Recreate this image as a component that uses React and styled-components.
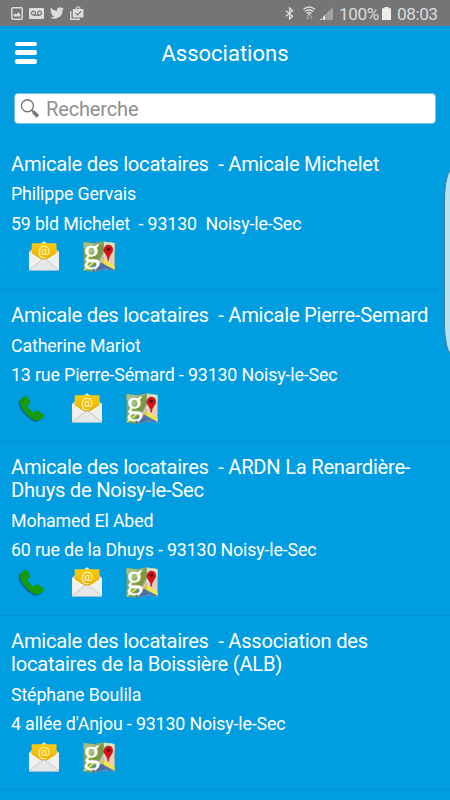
import React from 'react';
import styled, { createGlobalStyle } from 'styled-components';

const GlobalStyle = createGlobalStyle`
  * {
    box-sizing: border-box;
  }
  body {
    margin: 0;
    background: #009de0;
    font-family: Roboto, 'Liberation Sans', sans-serif;
    overflow: hidden;
  }
  h1, h2, p, ul {
    margin: 0;
    padding: 0;
    font-weight: 400;
  }
  svg {
    display: block;
    flex-shrink: 0;
    overflow: visible;
  }
`;

const Screen = styled.div`
  position: relative;
  width: 450px;
  height: 800px;
  overflow: hidden;
  background: #009de0;
  color: #fff;
`;

const StatusBar = styled.div`
  display: flex;
  justify-content: space-between;
  height: 26px;
  padding: 0 12px 0 11px;
  background: #757575;
  color: #dcdcdc;
`;

const StatusGroup = styled.div`
  display: flex;
  align-items: center;
  gap: ${({ $gap }) => $gap || 0}px;
`;

const StatusText = styled.span`
  width: ${({ $width }) => $width}px;
  margin-left: 6px;
  padding-top: 1px;
  font-size: 17.2px;
  letter-spacing: -0.45px;
  line-height: 26px;
  white-space: nowrap;
`;

const Header = styled.header`
  display: grid;
  grid-template-columns: 37px 1fr 37px;
  align-items: center;
  height: 55px;
`;

const MenuButton = styled.button`
  display: flex;
  flex-direction: column;
  gap: 4px;
  width: 37px;
  padding: 0 0 1.5px 15px;
  border: 0;
  background: none;
`;

const MenuLine = styled.span`
  height: 4.6px;
  border-radius: 2.3px;
  background: #fff;
`;

const Title = styled.h1`
  font-size: 22px;
  line-height: 26px;
  text-align: center;
`;

const SearchBar = styled.label`
  display: flex;
  align-items: center;
  gap: 7px;
  height: 31px;
  margin: 12px 14px 14px;
  padding-left: 6px;
  border: 1px solid #7fc3e4;
  border-radius: 4px;
  background: #fff;
`;

const SearchInput = styled.input`
  flex: 1;
  min-width: 0;
  padding: 1px 0 0;
  border: 0;
  outline: 0;
  background: none;
  font-family: inherit;
  font-size: 20px;
  letter-spacing: -0.15px;
  line-height: 24px;

  &::placeholder {
    color: #8f8f8f;
    opacity: 1;
  }
`;

const List = styled.ul`
  list-style: none;
`;

const Item = styled.li`
  height: ${({ $tall }) => ($tall ? 174.4 : 151.8)}px;
  padding: 14.5px 11px 0;
  border-bottom: 1px solid #0091cf;
`;

const ItemTitle = styled.h2`
  margin-bottom: 9px;
  font-size: 20.2px;
  letter-spacing: -0.27px;
  line-height: 22.7px;
  white-space: pre-wrap;
`;

const ItemText = styled.p`
  margin-bottom: 9.4px;
  font-size: 17.8px;
  letter-spacing: -0.14px;
  line-height: 20px;
  white-space: pre;
`;

const Actions = styled.div`
  display: flex;
  gap: 23px;
  margin-top: -2px;
  padding-left: ${({ $phone }) => ($phone ? 6 : 17)}px;
`;

const EdgePanel = styled.div`
  position: absolute;
  top: 168px;
  left: 444.4px;
  width: 25px;
  height: 188px;
  border: 1px solid #3a7d9c;
  border-radius: 9px / 32px;
  background: #b3e1f6;
`;

function PictureIcon() {
  return (
    <svg width="12" height="13" viewBox="0 0 12 13">
      <rect x="0.8" y="0.8" width="10.4" height="11.4" rx="1" fill="none" stroke="#dcdcdc" strokeWidth="1.5" />
      <path d="M2.5 9.5V8l1.8-1.7 1 1.2 2-2.5 2.2 3v1.5z" fill="#dcdcdc" />
    </svg>
  );
}

function VoicemailIcon() {
  return (
    <svg width="15" height="11" viewBox="0 0 15 11">
      <rect width="15" height="11" rx="1" fill="#dcdcdc" />
      <g fill="none" stroke="#757575" strokeWidth="1.2">
        <circle cx="4.5" cy="5.2" r="2" />
        <circle cx="10.5" cy="5.2" r="2" />
        <path d="M4.5 7.3h6" />
      </g>
    </svg>
  );
}

function TwitterIcon() {
  return (
    <svg width="14" height="12" viewBox="0 2 24 20">
      <path
        d="M24 4.6a10 10 0 0 1-2.8.8 5 5 0 0 0 2.1-2.7 10 10 0 0 1-3.1 1.2 4.9 4.9 0 0 0-8.4 4.5A14 14 0 0 1 1.7 3.1a4.9 4.9 0 0 0 1.5 6.6 5 5 0 0 1-2.2-.6 4.9 4.9 0 0 0 3.9 4.9 5 5 0 0 1-2.2.1 4.9 4.9 0 0 0 4.6 3.4A9.9 9.9 0 0 1 0 19.5a14 14 0 0 0 21.5-12.4A10 10 0 0 0 24 4.6z"
        fill="#dcdcdc"
      />
    </svg>
  );
}

function BagIcon() {
  return (
    <svg width="14" height="14" viewBox="0 0 14 14">
      <path d="M.8 5v8.2H10" fill="none" stroke="#dcdcdc" strokeWidth="1.4" />
      <path d="M2.8 3h3V1.4L6.7.5h2.8l.9.9V3h3v8.6H2.8zM7 1.5V3h2.3V1.5z" fill="#dcdcdc" fillRule="evenodd" />
      <path d="M5.5 7l2 2 3.6-3.6" fill="none" stroke="#757575" strokeWidth="1.2" />
    </svg>
  );
}

function BluetoothIcon() {
  return (
    <svg width="9" height="13" viewBox="-1 0 9 13">
      <path d="M.8 3.8l6.8 5.5-3 2.7V1l3 2.7L.8 9.3" fill="none" stroke="#dcdcdc" strokeWidth="1.3" />
    </svg>
  );
}

const WifiSvg = styled.svg`
  margin: 0 5px 0 9px;
`;

function WifiIcon() {
  return (
    <WifiSvg width="13" height="14" viewBox="-0.7 0 13 14">
      <g fill="none" stroke="#dcdcdc" strokeWidth="1.3">
        <path d="M.7 3.4q5.8-4.8 11.6 0" />
        <path d="M2.4 5.5q4.1-3.5 8.2 0" />
        <path d="M4.2 7.5q2.3-2 4.6 0" />
      </g>
      <circle cx="6.5" cy="8.7" r="0.9" fill="#dcdcdc" />
      <path
        d="M4.8 9.3v3.8M3.3 11.5l1.5 1.9 1.4-1.9M8.5 13.5V9.8M7 11.4l1.5-1.8 1.4 1.8"
        fill="none"
        stroke="#a2a2a2"
        strokeWidth="1"
      />
    </WifiSvg>
  );
}

function SignalIcon() {
  return (
    <svg width="13" height="13" viewBox="0 0 13 13">
      <path d="M0 13L13 0v13z" fill="#a2a2a2" />
      <path d="M0 13l2.2-2.2V13zM3 13v-3l2.4-2.4V13z" fill="#e8e8e8" />
      <path d="M2.5 9v4M6 6v7" stroke="#757575" strokeWidth="0.7" />
    </svg>
  );
}

function BatteryIcon() {
  return (
    <svg width="9" height="13" viewBox="0 0 9 13">
      <path d="M2.5 0h4v1.3H9V13H0V1.3h2.5z" fill="#ededed" />
    </svg>
  );
}

function SearchIcon() {
  return (
    <svg width="18" height="19" viewBox="0 0 18 19">
      <circle cx="6.4" cy="6.7" r="6" fill="none" stroke="#777" strokeWidth="1.4" />
      <path d="M10.6 11.2l2 2" stroke="#777" strokeWidth="1.8" />
      <path d="M12.3 12.8l4.6 4.6" stroke="#777" strokeWidth="3.6" />
    </svg>
  );
}

function PhoneIcon() {
  return (
    <svg width="31" height="31" viewBox="0.8 0 31 31">
      <path
        d="M3.8 6.7L9 2.9q1-.5 1.5.4l3.3 6q.4 1-.5 1.6l-2.8 1.8q2.3 4.5 6.6 7.3l2.8-2.2q.9-.7 1.7 0l5.8 4.2q.7.7.1 1.5-2 3.6-5.3 4.4-5 .8-10.8-4.6-7.5-7-8.3-12.7-.3-2.7.7-3.9z"
        fill="#086d91"
        transform="translate(-0.6 0.7)"
      />
      <path
        d="M4.3 6.2L9.3 2.7q1-.5 1.5.4l3.3 6q.4 1-.5 1.6l-2.6 1.7q2.2 4.5 6.4 7.3l2.8-2.2q.9-.7 1.7 0l5.8 4.2q.7.7.1 1.5-2 3.4-5.3 4.2-4.8.6-10.3-4.7-7.3-7-8.1-12.4-.3-2.7.2-4.1z"
        fill="#189b08"
      />
    </svg>
  );
}

function MailIcon() {
  return (
    <svg width="32" height="31" viewBox="0 0 32 31">
      <defs>
        <linearGradient id="paper" x1="0" y1="0" x2="0" y2="1">
          <stop offset="0" stopColor="#f8cc12" />
          <stop offset="1" stopColor="#e5ae00" />
        </linearGradient>
      </defs>
      <path d="M1 11l3-3 12-7.5L28 8l3 3v18.2H1z" fill="#d6dadb" />
      <path d="M13.5 2.5L16 .2l2.6 2.3z" fill="#f5f5f5" />
      <path d="M3.7 2.3h24.8v15L16 21 3.7 16z" fill="url(#paper)" />
      <text x="16" y="13.8" textAnchor="middle" fontFamily="Roboto, sans-serif" fontSize="13.5" fill="#fff7cd">
        @
      </text>
      <path d="M1 11l12 7.6 3 1.4 3-1.4L31 11v18.2H1z" fill="#f0f0f0" />
      <path d="M1 29.2l12.6-10.4q2.4-1.7 4.8 0L31 29.2z" fill="#e6e7e7" />
      <path d="M1 29.2l12.6-10.4q2.4-1.7 4.8 0L31 29.2" fill="none" stroke="#bcbdbd" strokeWidth="0.8" />
      <path d="M1 11l12 8.2M31 11l-12 8.2" stroke="#fff" strokeWidth="0.8" />
      <path d="M1 29.5h30" stroke="#9fbdc9" strokeWidth="0.7" />
    </svg>
  );
}

function MapIcon() {
  return (
    <svg width="32" height="32" viewBox="0 0 32 32">
      <defs>
        <clipPath id="sheet">
          <path d="M.5 1l10.3 1.2L20.7.5 31.5 2v27.5l-10.8-1.3L10.8 31 .5 29.2z" />
        </clipPath>
      </defs>
      <g clipPath="url(#sheet)">
        <path d="M0 0h32v32H0z" fill="#84a849" />
        <path d="M0 0h21L8 13 0 6z" fill="#a6c080" />
        <path d="M11 27L20.7 11 32 1v31H11z" fill="#e7cfbb" />
        <path d="M20.7 0H32v9L20.7 14z" fill="#d5dfc3" />
        <path d="M14 27V20l7-7v17z" fill="#b9b0ac" />
        <path d="M9 32l2-8 9-3 12 7v4z" fill="#4b76b9" />
        <path d="M19 17l13 8v4l-15-8z" fill="#f3e34a" />
        <path d="M12 29L29 1" stroke="#efe8d8" strokeWidth="1.6" />
        <path d="M0 30L11 21" stroke="#ebe77d" strokeWidth="1.4" />
        <path d="M10.8 0h9.9v32h-9.9z" fill="#3f5f50" opacity="0.2" />
      </g>
      <text
        transform="translate(0.4 20.8) scale(1.25 1.3)"
        fontFamily="'Liberation Serif', serif"
        fontSize="26"
        fill="#fff"
        stroke="#fff"
        strokeWidth="0.3"
      >
        g
      </text>
      <path
        d="M25 19.5q-.2-4.3-3-7.2-2.2-2.7-.8-5.2Q22.5 4 25.4 4q3.4.1 4.3 3.3.6 2.7-1.5 5.3-2.6 3.2-2.8 6.9z"
        fill="#d91115"
        stroke="#9d171a"
        strokeWidth="0.5"
      />
      <circle cx="25.4" cy="8.3" r="1.7" fill="#64070c" />
    </svg>
  );
}

const associations = [
  {
    title: 'Amicale des locataires  - Amicale Michelet',
    contact: 'Philippe Gervais',
    address: '59 bld Michelet  - 93130  Noisy-le-Sec',
  },
  {
    title: 'Amicale des locataires  - Amicale Pierre-Semard',
    contact: 'Catherine Mariot',
    address: '13 rue Pierre-Sémard - 93130 Noisy-le-Sec',
    phone: true,
  },
  {
    title: 'Amicale des locataires  - ARDN La Renardière-Dhuys de Noisy-le-Sec',
    contact: 'Mohamed El Abed',
    address: '60 rue de la Dhuys - 93130 Noisy-le-Sec',
    phone: true,
    tall: true,
  },
  {
    title: 'Amicale des locataires  - Association des locataires de la Boissière (ALB)',
    contact: 'Stéphane Boulila',
    address: "4 allée d'Anjou - 93130 Noisy-le-Sec",
    tall: true,
  },
];

export default function App() {
  return (
    <>
      <GlobalStyle />
      <Screen>
        <StatusBar>
          <StatusGroup $gap={6}>
            <PictureIcon />
            <VoicemailIcon />
            <TwitterIcon />
            <BagIcon />
          </StatusGroup>
          <StatusGroup>
            <BluetoothIcon />
            <WifiIcon />
            <SignalIcon />
            <StatusText $width={43}>100%</StatusText>
            <BatteryIcon />
            <StatusText $width={41}>08:03</StatusText>
          </StatusGroup>
        </StatusBar>

        <Header>
          <MenuButton type="button" aria-label="Menu">
            <MenuLine />
            <MenuLine />
            <MenuLine />
          </MenuButton>
          <Title>Associations</Title>
        </Header>

        <SearchBar>
          <SearchIcon />
          <SearchInput placeholder="Recherche" />
        </SearchBar>

        <List>
          {associations.map((item) => (
            <Item key={item.title} $tall={item.tall}>
              <ItemTitle>{item.title}</ItemTitle>
              <ItemText>{item.contact}</ItemText>
              <ItemText>{item.address}</ItemText>
              <Actions $phone={item.phone}>
                {item.phone && <PhoneIcon />}
                <MailIcon />
                <MapIcon />
              </Actions>
            </Item>
          ))}
        </List>

        {/* edge panel handle */}
        <EdgePanel />
      </Screen>
    </>
  );
}
